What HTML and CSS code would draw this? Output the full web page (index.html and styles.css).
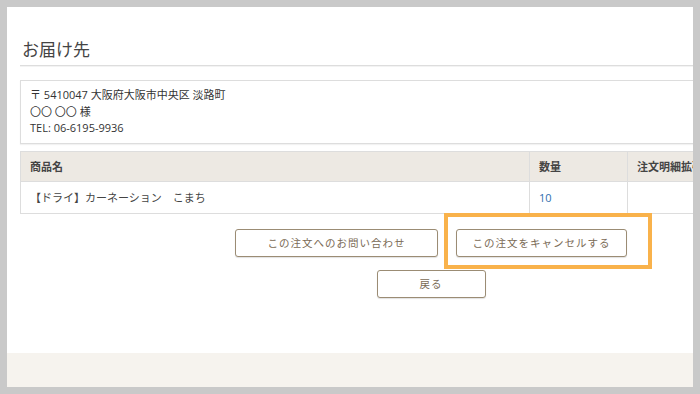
FILE: index.html
```html
<!DOCTYPE html>
<html lang="ja">
<head>
    <meta charset="UTF-8">
    <title>お届け先</title>
    <link rel="stylesheet" href="styles.css">
</head>
<body>
    <div class="panel">
        <div class="main">
            <div class="content">
                <h2 class="section-title">お届け先</h2>

                <div class="address-box">
                    <p>〒 5410047 大阪府大阪市中央区 淡路町</p>
                    <p>〇〇 〇〇 様</p>
                    <p>TEL: 06-6195-9936</p>
                </div>

                <table class="items">
                    <thead>
                        <tr>
                            <th class="col-name">商品名</th>
                            <th class="col-qty">数量</th>
                            <th class="col-ext">注文明細拡張</th>
                        </tr>
                    </thead>
                    <tbody>
                        <tr>
                            <td>【ドライ】カーネーション　こまち</td>
                            <td class="qty">10</td>
                            <td></td>
                        </tr>
                    </tbody>
                </table>

                <div class="actions">
                    <a class="btn btn-wide">この注文へのお問い合わせ</a>
                    <span class="marked">
                        <a class="btn btn-cancel">この注文をキャンセルする</a>
                        <span class="highlight"></span>
                    </span>
                </div>
                <div class="actions back-row">
                    <a class="btn btn-back">戻る</a>
                </div>
            </div>
        </div>
        <div class="footer"></div>
    </div>
</body>
</html>
```

FILE: styles.css
```css
* { margin: 0; padding: 0; box-sizing: border-box; }
body {
    background: #c9c9c9; padding: 7px;
    font-family: 'Open Sans', 'Noto Sans CJK JP', sans-serif; color: #333;
}

.panel { height: 380px; background: #fff; overflow: hidden; display: flex; flex-direction: column; }
.main { flex: 1; padding-left: 13px; overflow: hidden; }
.content { width: 822px; }
.footer { height: 34px; background: #f6f3ee; }

.section-title {
    font-size: 17px; font-weight: 400; line-height: 24px; color: #444;
    margin-top: 31px; padding-bottom: 3px; padding-left: 2px;
    border-bottom: 1px solid #ddd; box-shadow: 0 1px 0 #f3f3f3;
}

.address-box {
    margin-top: 14px; padding: 6px 9px; border: 1px solid #ddd;
    box-shadow: 0 1px 1px rgba(0, 0, 0, 0.05);
}
.address-box p { font-size: 11px; line-height: 16.5px; color: #333; }

.items { width: 100%; margin-top: 7px; border-collapse: collapse; font-size: 11px; }
.items th, .items td { border: 1px solid #ddd; padding: 0 9px; text-align: left; white-space: nowrap; }
.items th { background: #ede9e3; height: 30px; font-weight: 600; color: #444; }
.items td { height: 32px; color: #444; }
.items td.qty { color: #2f6eae; }
.col-name { width: 509px; }
.col-qty { width: 98px; }

.actions { display: flex; justify-content: center; gap: 18px; margin-top: 15px; }
.back-row { margin-top: 13px; }

.btn {
    display: flex; align-items: center; justify-content: center;
    height: 28px; border: 1px solid #9b8c74; border-radius: 3px;
    font-size: 10.5px; letter-spacing: 1px; color: #7a6a55; background: #fff;
    box-shadow: 0 1px 1px rgba(0, 0, 0, 0.12); cursor: pointer;
}
.btn-wide { width: 203px; }
.btn-cancel { width: 171px; }
.btn-back { width: 109px; }

.marked { position: relative; display: block; }
.highlight {
    position: absolute; left: -12px; top: -16px; width: 208px; height: 56px;
    border: 4px solid #f9b24b; pointer-events: none;
}
```
